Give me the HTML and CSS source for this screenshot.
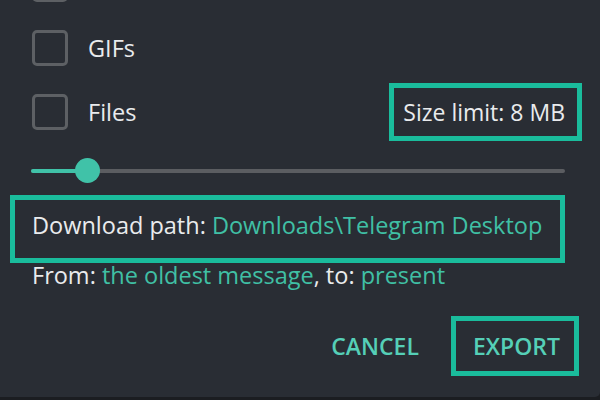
FILE: index.html
```html
<!DOCTYPE html>
<html>
<head>
<meta charset="utf-8">
<link rel="stylesheet" href="styles.css">
</head>
<body>
<div class="dialog">
  <div class="content">
    <div class="row">
      <span class="checkbox"></span>
    </div>
    <div class="row">
      <span class="checkbox"></span>
      <span class="label">GIFs</span>
    </div>
    <div class="row">
      <span class="checkbox"></span>
      <span class="label">Files</span>
      <span class="size-limit">Size limit: 8 MB</span>
    </div>
    <div class="slider">
      <div class="track">
        <div class="fill" style="width: 57px"></div>
      </div>
      <div class="thumb" style="left: 44px"></div>
    </div>
    <div class="path">Download path: <span class="link">Downloads\Telegram Desktop</span></div>
    <div class="range">From: <span class="link">the oldest message</span>, to: <span class="link">present</span></div>
  </div>
  <div class="buttons">
    <button class="btn">CANCEL</button>
    <button class="btn btn-export">EXPORT</button>
  </div>
</div>
</body>
</html>
```
FILE: styles.css
```css
html, body {
  margin: 0;
  padding: 0;
}
body {
  background: #1b1d21;
  width: 600px;
  height: 400px;
  overflow: hidden;
  font-family: "Open Sans", "Noto Sans", sans-serif;
}
.dialog {
  width: 600px;
  height: 397px;
  background: #292d34;
  border-bottom-right-radius: 5px;
  overflow: hidden;
  color: #e9ebed;
  font-size: 23.5px;
  line-height: 24px;
}
.content {
  margin-top: -34px;
  padding: 0 35px 0 32px;
}
.row {
  display: flex;
  align-items: center;
  height: 36px;
  margin-bottom: 28px;
}
.checkbox {
  box-sizing: border-box;
  width: 36px;
  height: 36px;
  border: 3px solid #5d6064;
  border-radius: 5px;
  flex: none;
}
.label {
  margin-left: 20px;
  flex: 1;
}
.size-limit {
  font-size: 23px;
  border: 5px solid #1abc9c;
  padding: 12px 12px 12px 9px;
  margin-right: -17px;
}
.slider {
  position: relative;
  height: 25px;
  margin: 26px 0 0 -1px;
  display: flex;
  align-items: center;
}
.track {
  flex: 1;
  height: 4px;
  border-radius: 2px;
  background: #5b5d61;
  overflow: hidden;
}
.fill {
  height: 100%;
  background: #40c2a8;
}
.thumb {
  position: absolute;
  top: 0;
  width: 25px;
  height: 25px;
  border-radius: 50%;
  background: #40c2a8;
}
.path {
  width: fit-content;
  white-space: nowrap;
  margin: 12px 0 0 -22px;
  border: 5px solid #1abc9c;
  padding: 13px 18px 21px 17px;
}
.link {
  color: #40c0a5;
}
.range {
  margin-top: 0;
  white-space: nowrap;
}
.buttons {
  display: flex;
  justify-content: flex-end;
  gap: 13px;
  padding-right: 21px;
  margin-top: 29px;
}
.btn {
  font-family: "Open Sans", "Noto Sans", sans-serif;
  font-size: 23px;
  font-weight: 600;
  line-height: 24px;
  color: #55cfb7;
  background: none;
  border: 5px solid transparent;
  padding: 13px 14px 13px 17px;
  margin: 0;
}
.btn-export {
  border-color: #1abc9c;
}
```
